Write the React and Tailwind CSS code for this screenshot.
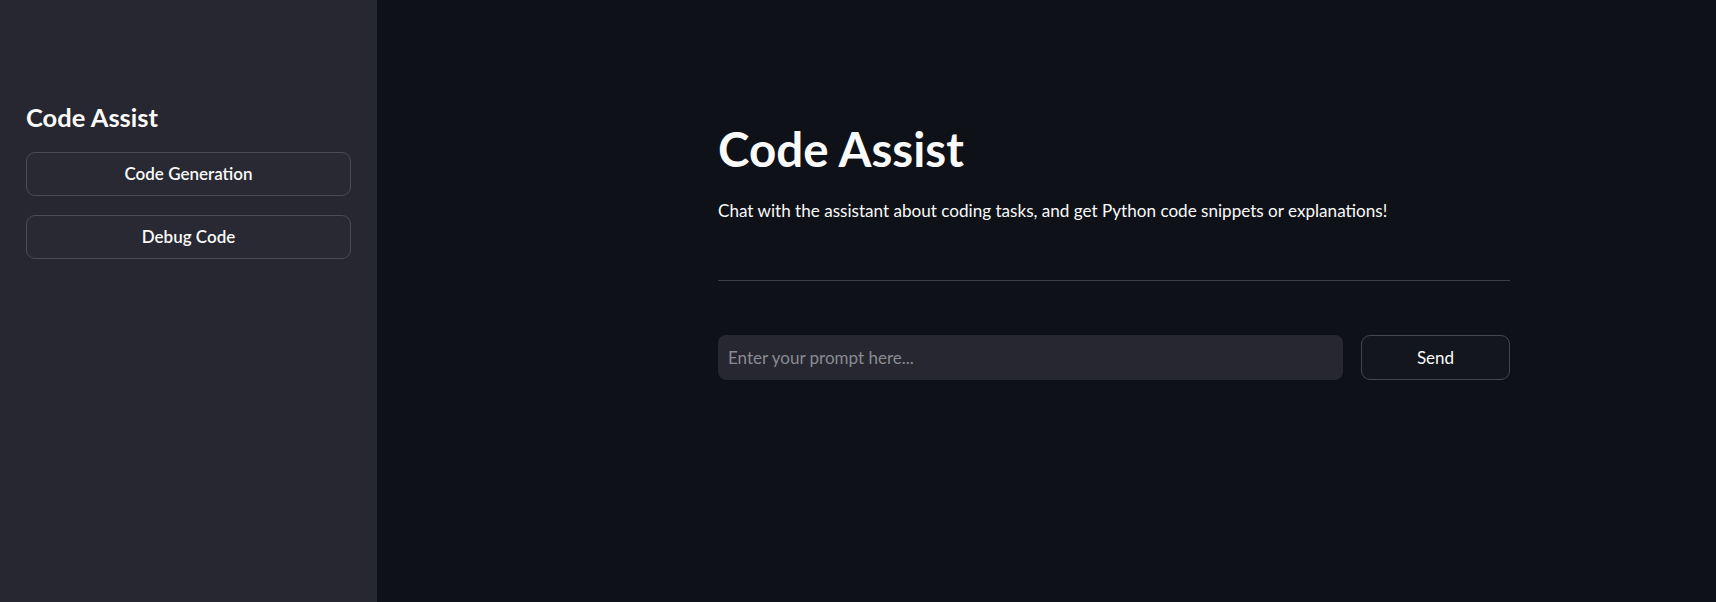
import React from 'react';

const font = { fontFamily: 'Lato, "Noto Sans", sans-serif' };

function Sidebar() {
  return (
    <aside className="w-[377px] shrink-0 bg-[#262730] px-[26px] pt-[100px]">
      <h2 className="text-[25.5px] font-bold leading-[34px] text-[#fafafa]">Code Assist</h2>
      <div className="mt-[18px] flex flex-col gap-[19px]">
        <button className="h-[44px] w-full rounded-[9px] border border-[#4a4b53] bg-[#282932] text-[17px] font-semibold text-[#fafafa]">
          Code Generation
        </button>
        <button className="h-[44px] w-full rounded-[9px] border border-[#4a4b53] bg-[#282932] text-[17px] font-semibold text-[#fafafa]">
          Debug Code
        </button>
      </div>
    </aside>
  );
}

export default function App() {
  return (
    <div className="flex h-[602px] w-full bg-[#0e1117]" style={font}>
      <Sidebar />
      <main className="flex-1 pl-[341px] pt-[121px]">
        <div className="w-[792px]">
          <h1 className="text-[47.5px] font-bold leading-[56px] text-[#fafafa]">Code Assist</h1>
          <p className="mt-[21px] text-[17.1px] leading-[26px] text-[#fafafa]">
            Chat with the assistant about coding tasks, and get Python code snippets or explanations!
          </p>
          <div className="mt-[56px] h-px bg-[#3b3e45]" />
          <div className="mt-[54px] flex gap-[18px]">
            <input
              className="h-[45px] flex-1 rounded-[8px] bg-[#262730] px-[10px] text-[17px] text-[#fafafa] outline-none placeholder:text-[#8a8b92]"
              placeholder="Enter your prompt here..."
            />
            <button className="h-[45px] w-[149px] rounded-[9px] border border-[#45474e] bg-[#13161d] text-[17px] text-[#fafafa]">
              Send
            </button>
          </div>
        </div>
      </main>
    </div>
  );
}
